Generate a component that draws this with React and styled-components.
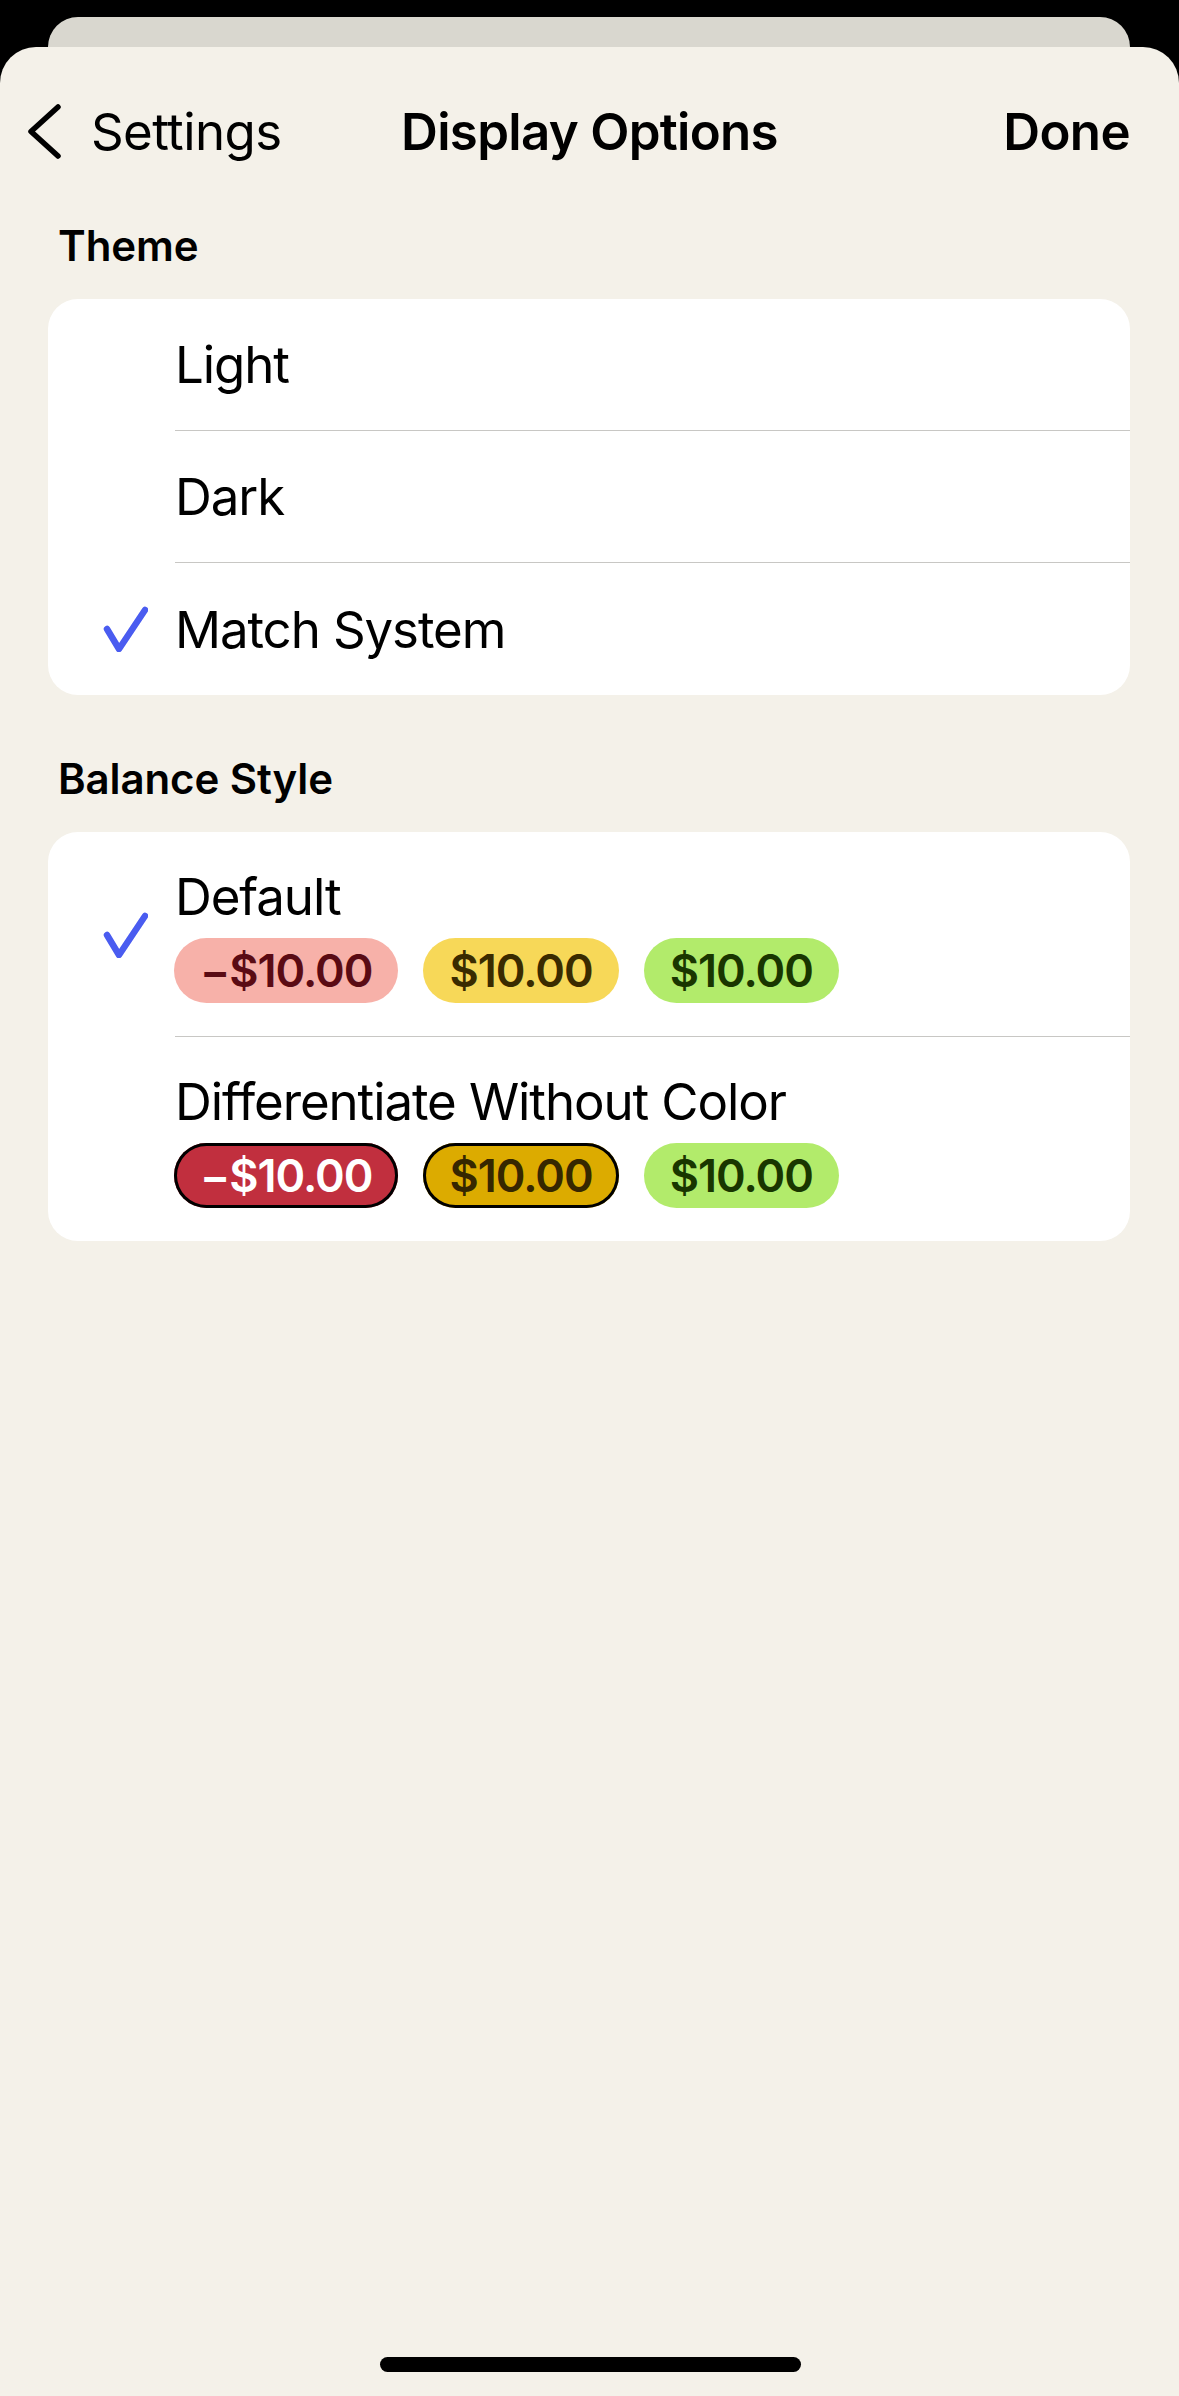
import React from "react";
import styled, { createGlobalStyle } from "styled-components";

const GlobalStyle = createGlobalStyle`
  html, body { margin: 0; padding: 0; background: #000; }
  body { font-family: Inter, "Noto Sans", "Liberation Sans", sans-serif; -webkit-font-smoothing: antialiased; }
  * { box-sizing: border-box; }
`;

const Screen = styled.div`
  height: 2396px;
  width: 1179px;
  display: flex;
  flex-direction: column;
  padding-top: 17px;
  background: #000;
  overflow: hidden;
`;

const BackCard = styled.div`
  height: 30px;
  margin: 0 49px 0 48px;
  background: #d9d7cf;
  border-radius: 32px 32px 0 0;
  flex-shrink: 0;
`;

const Sheet = styled.div`
  flex: 1;
  display: flex;
  flex-direction: column;
  background: #f4f1e9;
  border-radius: 36px 36px 0 0;
  padding-top: 18px;
  color: #000;
`;

const NavBar = styled.div`
  height: 132px;
  display: grid;
  grid-template-columns: 1fr auto 1fr;
  align-items: center;
  padding: 0 49px;
`;

const BackButton = styled.div`
  display: flex;
  align-items: center;
  gap: 30px;
  margin-left: -22px;
  font-size: 51px;
  line-height: 61px;
  font-weight: 400;
  letter-spacing: -0.6px;
`;

const Title = styled.div`
  font-size: 51px;
  line-height: 61px;
  font-weight: 600;
  letter-spacing: -0.7px;
`;

const DoneButton = styled.div`
  justify-self: end;
  font-size: 51px;
  line-height: 61px;
  font-weight: 600;
  letter-spacing: -0.6px;
`;

const SectionHeader = styled.div`
  margin: ${(p) => p.$top}px 0 28px 58px;
  font-size: 42px;
  line-height: 50px;
  font-weight: 600;
  letter-spacing: -0.1px;
`;

const Card = styled.div`
  margin: 0 49px 0 48px;
  background: #fff;
  border-radius: 30px;
  overflow: hidden;
`;

const Row = styled.div`
  display: flex;
  align-items: stretch;
`;

const CheckSlot = styled.div`
  width: 127px;
  flex-shrink: 0;
  display: flex;
  align-items: center;
  padding-left: 54px;
`;

const RowBody = styled.div`
  flex: 1;
  min-height: ${(p) => (p.$tall ? "auto" : "132px")};
  display: flex;
  flex-direction: column;
  justify-content: center;
  padding: ${(p) => (p.$tall ? "34px 0 33px" : "0")};
  border-bottom: ${(p) => (p.$last ? "none" : "1px solid #c8c7c4")};
`;

const Label = styled.div`
  font-size: 51px;
  line-height: 61px;
  font-weight: 400;
  letter-spacing: -1.1px;
`;

const PillRow = styled.div`
  display: flex;
  gap: 25px;
  margin-top: 11px;
  margin-left: -1px;
`;

const Pill = styled.div`
  height: 65px;
  padding: 0 26px;
  border-radius: 33px;
  display: inline-flex;
  align-items: center;
  font-size: 45px;
  font-weight: 600;
  letter-spacing: -1px;
  background: ${(p) => p.$bg};
  color: ${(p) => p.$fg};
  box-shadow: ${(p) => (p.$outlined ? "inset 0 0 0 3px #000" : "none")};
`;

const Spacer = styled.div`
  flex: 1;
`;

const HomeIndicator = styled.div`
  width: 421px;
  height: 15px;
  border-radius: 8px;
  background: #000;
  align-self: center;
  margin: 0 0 24px 2px;
`;

const Check = () => (
  <svg width="46" height="46" viewBox="0 0 46 46">
    <path
      d="M5 23 L17 43 L43 4"
      fill="none"
      stroke="#4a5cf0"
      strokeWidth="6.5"
      strokeLinecap="round"
      strokeLinejoin="round"
    />
  </svg>
);

const Chevron = () => (
  <svg width="34" height="57" viewBox="0 0 34 57">
    <path
      d="M31 4 L4 28.5 L31 53"
      fill="none"
      stroke="#000"
      strokeWidth="5.5"
      strokeLinecap="round"
      strokeLinejoin="round"
    />
  </svg>
);

const themes = [
  { label: "Light", checked: false },
  { label: "Dark", checked: false },
  { label: "Match System", checked: true },
];

const pillSets = {
  default: [
    { text: "−$10.00", bg: "#f7b1a9", fg: "#5a0b14" },
    { text: "$10.00", bg: "#f7d858", fg: "#3a2b00" },
    { text: "$10.00", bg: "#b2eb6b", fg: "#193600" },
  ],
  outlined: [
    { text: "−$10.00", bg: "#c12f3e", fg: "#ffffff", outlined: true },
    { text: "$10.00", bg: "#dcab00", fg: "#362700", outlined: true },
    { text: "$10.00", bg: "#b2eb6b", fg: "#193600" },
  ],
};

const styles = [
  { label: "Default", pills: pillSets.default, checked: true },
  { label: "Differentiate Without Color", pills: pillSets.outlined, checked: false },
];

export default function App() {
  return (
    <>
      <GlobalStyle />
      <Screen>
        <BackCard />
        <Sheet>
          <NavBar>
            <BackButton>
              <Chevron />
              <span>Settings</span>
            </BackButton>
            <Title>Display Options</Title>
            <DoneButton>Done</DoneButton>
          </NavBar>

          <SectionHeader $top={24}>Theme</SectionHeader>
          <Card>
            {themes.map((t, i) => (
              <Row key={t.label}>
                <CheckSlot>{t.checked && <Check />}</CheckSlot>
                <RowBody $last={i === themes.length - 1}>
                  <Label>{t.label}</Label>
                </RowBody>
              </Row>
            ))}
          </Card>

          <SectionHeader $top={59}>Balance Style</SectionHeader>
          <Card>
            {styles.map((s, i) => (
              <Row key={s.label}>
                <CheckSlot>{s.checked && <Check />}</CheckSlot>
                <RowBody $tall $last={i === styles.length - 1}>
                  <Label>{s.label}</Label>
                  <PillRow>
                    {s.pills.map((p, j) => (
                      <Pill key={j} $bg={p.bg} $fg={p.fg} $outlined={p.outlined}>
                        {p.text}
                      </Pill>
                    ))}
                  </PillRow>
                </RowBody>
              </Row>
            ))}
          </Card>

          <Spacer />
          <HomeIndicator />
        </Sheet>
      </Screen>
    </>
  );
}
